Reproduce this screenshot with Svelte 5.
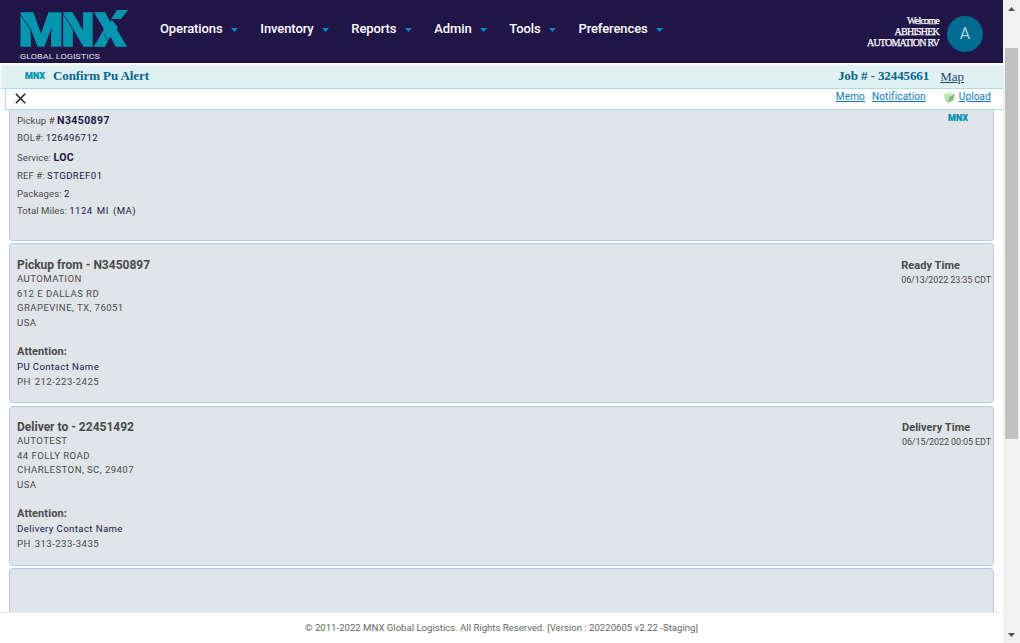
<script>
  const menu = ['Operations', 'Inventory', 'Reports', 'Admin', 'Tools', 'Preferences'];
  const details = [
    { key: 'Pickup #', value: 'N3450897', strong: true, h: 17 },
    { key: 'BOL#:', value: '126496712', h: 20 },
    { key: 'Service:', value: 'LOC', strong: true, h: 18 },
    { key: 'REF #:', value: 'STGDREF01', h: 18 },
    { key: 'Packages:', value: '2', h: 17 },
    { key: 'Total Miles:', value: '1124 MI (MA)', h: 18 }
  ];
  const stops = [
    { title: 'Pickup from - N3450897', lines: ['AUTOMATION', '612 E DALLAS RD', 'GRAPEVINE, TX, 76051', 'USA'], contact: 'PU Contact Name', phone: '212-223-2425', label: 'Ready Time', time: '06/13/2022 23:35 CDT' },
    { title: 'Deliver to - 22451492', lines: ['AUTOTEST', '44 FOLLY ROAD', 'CHARLESTON, SC, 29407', 'USA'], contact: 'Delivery Contact Name', phone: '313-233-3435', label: 'Delivery Time', time: '06/15/2022 00:05 EDT' }
  ];
</script>

{#snippet miniLogo()}
  <svg class="mini" width="21" height="8" viewBox="0 0 21 8"><text x="0" y="7.3" textLength="20" lengthAdjust="spacingAndGlyphs">MNX</text></svg>
{/snippet}

<div class="window">
  <div class="page">
    <header>
      <svg class="logo" width="112" height="54" viewBox="0 0 112 54">
        <g class="mark">
          <text x="-1.5" y="37.3" textLength="45" lengthAdjust="spacingAndGlyphs">M</text>
          <text x="41.5" y="37.3" textLength="33" lengthAdjust="spacingAndGlyphs">N</text>
          <text x="75" y="37.3" textLength="31" lengthAdjust="spacingAndGlyphs">X</text>
        </g>
        <path d="M90.500 2H109v17H98.500l-7-8.500z" fill="#201547" />
        <path d="m91 10 6-9h11l-7 9z" fill="#0495af" />
        <path d="m-.5 4 10.500 16M42.500 4l10.500 16M84 25l9 14" fill="none" stroke="#201547" stroke-width=".8" />
        <text class="tagline" x="0" y="49.500" textLength="80" lengthAdjust="spacingAndGlyphs">GLOBAL LOGISTICS</text>
      </svg>
      <nav>
        {#each menu as label}
          <a href="#menu"><span>{label}</span><svg width="7" height="4" viewBox="0 0 7 4"><path d="M0 0h7L3.5 4z" fill="#0588c9" /></svg></a>
        {/each}
      </nav>
      <div class="user">Welcome<br />ABHISHEK<br />AUTOMATION RV</div>
      <div class="avatar">A</div>
    </header>
    <div class="titlebar">
      {@render miniLogo()}
      <h1>Confirm Pu Alert</h1>
      <strong>Job # - 32445661</strong>
      <a href="#map">Map</a>
    </div>
    <div class="toolbar">
      <svg class="close" width="11" height="11" viewBox="0 0 11 11"><path d="M.8.8l9.400 9.400M10.200.8.8 10.200" fill="none" stroke="#222" stroke-width="1.500" /></svg>
      <div class="links">
        <a href="#memo">Memo</a>
        <a href="#notification">Notification</a>
        <svg width="12" height="11" viewBox="0 0 12 11"><path d="M1 2 6 0l1 2 3-1v7l-6 3-3-3z" fill="#c5e5bf" /><path d="m5 5 6-3-2 6-5 3z" fill="#7fbd77" /><path d="m0 2 4 2v7L1 8z" fill="#b9dfb3" /></svg>
        <a class="upload" href="#upload">Upload</a>
      </div>
    </div>
    <main>
      <section class="summary">
        <div class="details">
          {#each details as row}
            <div class="detail" style:height="{row.h}px"><span>{row.key}</span> <b class:strong={row.strong}>{row.value}</b></div>
          {/each}
        </div>
        {@render miniLogo()}
      </section>
      {#each stops as stop}
        <section class="stop">
          <div class="address">
            <h2>{stop.title}</h2>
            {#each stop.lines as line}<div class="line">{line}</div>{/each}
            <h3>Attention:</h3>
            <div class="contact">{stop.contact}</div>
            <div class="phone"><span>PH</span><span>{stop.phone}</span></div>
          </div>
          <div class="time"><h3>{stop.label}</h3><div>{stop.time}</div></div>
        </section>
      {/each}
      <section class="next"></section>
    </main>
    <footer>© 2011-2022 MNX Global Logistics. All Rights Reserved. [Version : 20220605 v2.22 -Staging]</footer>
  </div>
  <div class="scrollbar">
    <svg width="7" height="4" viewBox="0 0 7 4"><path d="M0 4h7L3.5 0z" fill="#505050" /></svg>
    <div class="thumb"></div>
    <svg class="down" width="7" height="4" viewBox="0 0 7 4"><path d="M0 0h7L3.5 4z" fill="#505050" /></svg>
  </div>
</div>

<style>
  :global(body) { margin: 0; overflow: hidden; }
  * { box-sizing: border-box; }
  .window { width: 1020px; height: 643px; display: flex; background: #fff; font-family: Roboto, sans-serif; color: #4a4a4a; }
  .page { width: 1003px; display: flex; flex-direction: column; }
  h1, h2, h3 { margin: 0; }
  svg { display: block; flex: none; }
  header { height: 63px; flex: none; background: #201547; display: flex; align-items: flex-start; padding: 9px 20px 0; }
  .logo { overflow: visible; }
  .mark { font: 900 45.5px Roboto, sans-serif; fill: #0495af; stroke: #0495af; stroke-width: 1.4; }
  .tagline { font: 7.8px Roboto, sans-serif; fill: #d6d3df; stroke: #d6d3df; stroke-width: .1; }
  nav { display: flex; margin-left: 28px; padding-top: 11px; gap: 22px; }
  nav a { display: flex; align-items: center; gap: 8.8px; color: #fff; text-decoration: none; font-size: 13px; font-weight: 500; line-height: 18px; letter-spacing: -.1px; }
  nav svg { margin-top: 1px; }
  .user { margin-left: auto; padding-top: 6px; text-align: right; font: 10px/11px "Liberation Serif", serif; letter-spacing: -.77px; color: #fff; -webkit-text-stroke: .25px #fff; }
  .avatar { width: 36px; height: 36px; margin: 7px 0 0 8px; border-radius: 50%; background: #006b91; color: #a9d5e6; font-size: 16px; line-height: 35px; text-align: center; }
  .titlebar { height: 24px; flex: none; margin: 2px 0 0 1px; background: #e1f0f3; border-bottom: 1px solid #b1dce1; display: flex; align-items: center; padding: 0 39px 1px 24px; font-family: "Liberation Serif", serif; color: #006890; font-size: 13px; }
  .mini text { font: 900 9px Roboto, sans-serif; fill: #0495af; stroke: #0495af; stroke-width: .2; }
  .titlebar .mini { margin-top: -1px; }
  .titlebar h1 { font-size: 13px; margin-left: 7px; letter-spacing: -.1px; }
  .titlebar strong { margin-left: auto; letter-spacing: -.1px; }
  .titlebar a { margin: 2px 0 0 11px; color: #1b466f; }
  .toolbar { height: 21px; flex: none; margin-left: 5px; border: 1px solid #b1dce1; border-width: 0 0 1px 1px; display: flex; padding: 4px 12px 0 9px; }
  .links { display: flex; margin: -4px 0 0 auto; font-size: 10px; line-height: 15px; letter-spacing: .15px; }
  .links a { color: #0878bd; margin-right: 7px; }
  .links svg { margin: 3px 3px 0 11px; }
  .links .upload { margin-right: 0; }
  main { flex: 1; min-height: 0; overflow: hidden; padding: 0 9px; }
  section { display: flex; justify-content: space-between; background: #e0e5e9; border: 1px solid #b1cde9; border-radius: 4px; }
  .summary { height: 131px; border-top: 0; border-radius: 0 0 4px 4px; padding: 2px 24px 0 7px; }
  .summary .mini { margin-top: 2px; }
  .detail { line-height: 18px; font-size: 9.6px; letter-spacing: .05px; white-space: nowrap; }
  .detail b { font-weight: 400; color: #201547; letter-spacing: .43px; word-spacing: 1.5px; }
  .detail b.strong { font-weight: 700; font-size: 10.5px; letter-spacing: .4px; }
  .stop { height: 160px; margin: 2px 0 3px; padding: 14px 2px 0 7px; }
  h2 { font-size: 12px; line-height: 14px; font-weight: 700; }
  h3 { font-size: 11px; line-height: 14px; font-weight: 700; }
  .stop + .stop { margin-bottom: 2px; padding-top: 13px; }
  .address h3 { margin-top: 15px; letter-spacing: .1px; }
  .line { font-size: 9.6px; line-height: 14.5px; letter-spacing: .42px; }
  .contact { font-size: 9.6px; line-height: 15px; letter-spacing: .4px; color: #201547; }
  .phone { display: flex; gap: 4px; font-size: 9.6px; line-height: 15px; letter-spacing: .42px; }
  .time { font-size: 9px; line-height: 15px; letter-spacing: -.1px; padding-top: 1px; }
  .time h3 { letter-spacing: .05px; }
  .next { height: 80px; }
  footer { height: 31px; flex: none; border-top: 1px solid #e7ebed; text-align: center; font-size: 9.6px; line-height: 30px; color: #666; }
  .scrollbar { width: 17px; background: #f1f1f1; display: flex; flex-direction: column; align-items: center; padding: 7px 0 2px; }
  .thumb { width: 13px; height: 391px; margin-top: 37px; background: #c1c1c1; }
  .down { margin: auto 0 4px; }
</style>
